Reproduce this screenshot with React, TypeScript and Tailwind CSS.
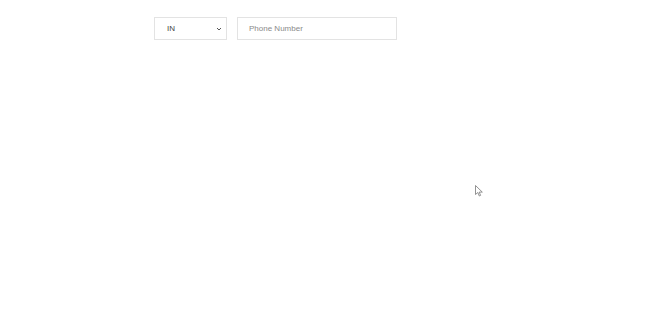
import React from "react";

export default function App() {
  return (
    <div className="relative w-[669px] h-[325px] bg-white" style={{ fontFamily: '"Liberation Sans", Arial, sans-serif' }}>
      <div className="flex items-start gap-[10px] pl-[154px] pt-[17px]">
        <div className="flex items-center justify-between w-[73px] h-[23px] border border-[#e3e3e3] pl-[12px] pr-[4px] bg-white">
          <span className="text-[8px] text-[#444]">IN</span>
          <svg width="6" height="4" viewBox="0 0 6 4">
            <path d="M1 1 L3 3 L5 1" fill="none" stroke="#555" strokeWidth="1" />
          </svg>
        </div>
        <div className="flex items-center w-[160px] h-[23px] border border-[#e3e3e3] pl-[11px] bg-white">
          <span className="text-[8px] text-[#8a8a8a]">Phone Number</span>
        </div>
      </div>
      <svg className="absolute left-[475px] top-[185px]" width="8" height="12" viewBox="0 0 8 12">
        <path d="M0.5 0.5 L0.5 9.5 L2.8 7.5 L4.3 11 L5.6 10.4 L4.2 7.1 L7.3 7.1 Z" fill="#fff" stroke="#777" strokeWidth="0.8" />
      </svg>
    </div>
  );
}
